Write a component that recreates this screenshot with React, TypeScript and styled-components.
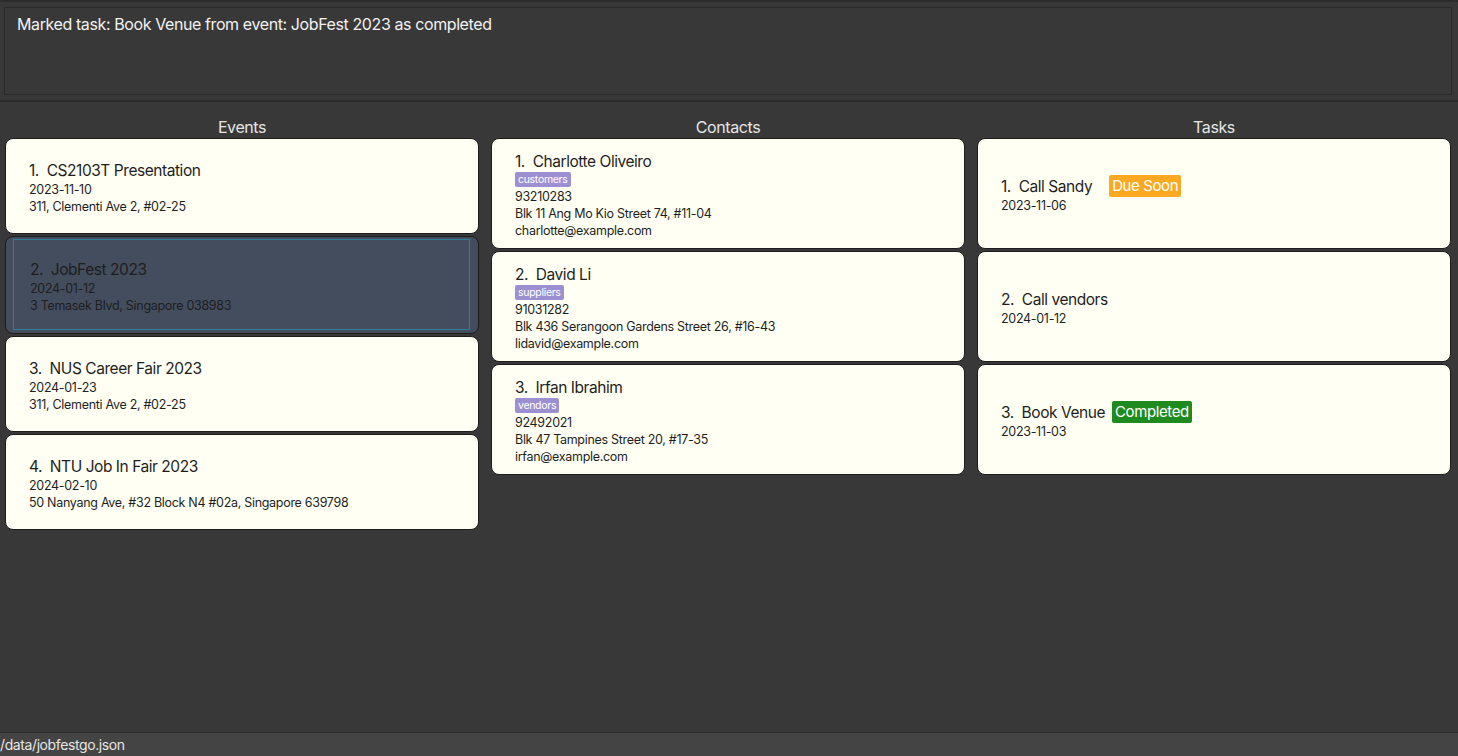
import React from 'react';
import styled, { createGlobalStyle, css } from 'styled-components';

const GlobalStyle = createGlobalStyle`
  html, body {
    margin: 0;
    padding: 0;
    background: #383838;
    font-family: Inter, "Open Sans", "Liberation Sans", sans-serif;
    overflow: hidden;
  }
  * { box-sizing: border-box; }
`;

const Window = styled.div`
  width: 1458px;
  height: 756px;
  display: flex;
  flex-direction: column;
  background: #383838;
  border-top: 2px solid #2c2c2c;
`;

const ResultArea = styled.div`
  padding: 5px 6px 5px 4px;
  border-bottom: 2px solid #2c2c2c;
`;

const ResultBox = styled.div`
  height: 88px;
  border: 1px solid #2a2a2a;
  padding: 5px 12px;
  color: #f2f2f2;
  font-size: 16px;
  line-height: 22px;
  letter-spacing: -0.4px;
`;

const Panels = styled.div`
  flex: 1;
  display: grid;
  grid-template-columns: repeat(3, 1fr);
  padding-top: 10px;
`;

const Column = styled.div`
  display: flex;
  flex-direction: column;
  padding: 0 7px 0 5px;
`;

const ColumnTitle = styled.div`
  text-align: center;
  color: #e6e6e6;
  font-size: 16px;
  line-height: 20px;
  letter-spacing: -0.4px;
  height: 26px;
  padding-top: 5px;
`;

const List = styled.div`
  display: flex;
  flex-direction: column;
  gap: 2px;
`;

const Card = styled.div<{ $h: number; $selected?: boolean }>`
  position: relative;
  height: ${({ $h }) => $h}px;
  display: flex;
  flex-direction: column;
  justify-content: center;
  padding: 2px 20px 0 23px;
  background: #fffff3;
  border: 1px solid #1c1c1c;
  border-radius: 8px;
  color: #1e1e1e;
  ${({ $selected }) =>
    $selected &&
    css`
      background: #434d5e;
      padding-left: 24px;
      &::after {
        content: '';
        position: absolute;
        inset: 2px 8px 3px 7px;
        border: 1px solid #2e7f98;
        pointer-events: none;
      }
    `}
`;

const TitleRow = styled.div`
  display: flex;
  align-items: center;
`;

const Title = styled.div`
  font-size: 15.5px;
  line-height: 21px;
  letter-spacing: -0.45px;
  white-space: pre;
  color: #1e1e1e;
`;

const Detail = styled.div`
  font-size: 12.5px;
  line-height: 17px;
  letter-spacing: -0.3px;
  white-space: pre;
  color: #1e1e1e;
`;

const Tag = styled.span`
  align-self: flex-start;
  background: #9d90d2;
  color: #ffffff;
  font-size: 10.5px;
  line-height: 15px;
  letter-spacing: -0.3px;
  padding: 0 3px;
  border-radius: 2px;
  margin: 0 0 1px;
`;

const Badge = styled.span<{ $color: string; $gap: number }>`
  background: ${({ $color }) => $color};
  color: #ffffff;
  font-size: 15px;
  line-height: 22px;
  letter-spacing: -0.4px;
  padding: 0 3px;
  border-radius: 2px;
  margin-left: ${({ $gap }) => $gap}px;
`;

const StatusBar = styled.div`
  height: 24px;
  background: #444444;
  border-top: 1px solid #2e2e2e;
  color: #e6e6e6;
  font-size: 14px;
  line-height: 23px;
  letter-spacing: -0.4px;
`;

const events = [
  { title: 'CS2103T Presentation', date: '2023-11-10', address: '311, Clementi Ave 2, #02-25' },
  { title: 'JobFest 2023', date: '2024-01-12', address: '3 Temasek Blvd, Singapore 038983', selected: true },
  { title: 'NUS Career Fair 2023', date: '2024-01-23', address: '311, Clementi Ave 2, #02-25' },
  { title: 'NTU Job In Fair 2023', date: '2024-02-10', address: '50 Nanyang Ave, #32 Block N4 #02a, Singapore 639798' },
];

const contacts = [
  { name: 'Charlotte Oliveiro', tag: 'customers', phone: '93210283', address: 'Blk 11 Ang Mo Kio Street 74, #11-04', email: 'charlotte@example.com' },
  { name: 'David Li', tag: 'suppliers', phone: '91031282', address: 'Blk 436 Serangoon Gardens Street 26, #16-43', email: 'lidavid@example.com' },
  { name: 'Irfan Ibrahim', tag: 'vendors', phone: '92492021', address: 'Blk 47 Tampines Street 20, #17-35', email: 'irfan@example.com' },
];

const tasks = [
  { name: 'Call Sandy', date: '2023-11-06', badge: 'Due Soon', color: '#fba823', gap: 17 },
  { name: 'Call vendors', date: '2024-01-12' },
  { name: 'Book Venue', date: '2023-11-03', badge: 'Completed', color: '#1f8b1f', gap: 7 },
];

const App: React.FC = () => {
  return (
    <>
      <GlobalStyle />
      <Window>
        <ResultArea>
          <ResultBox>Marked task: Book Venue from event: JobFest 2023 as completed</ResultBox>
        </ResultArea>

        <Panels>
          <Column>
            <ColumnTitle>Events</ColumnTitle>
            <List>
              {events.map((ev, i) => (
                <Card key={ev.title} $h={ev.selected ? 98 : 96} $selected={ev.selected}>
                  <Title>{`${i + 1}.  ${ev.title}`}</Title>
                  <Detail>{ev.date}</Detail>
                  <Detail>{ev.address}</Detail>
                </Card>
              ))}
            </List>
          </Column>

          <Column>
            <ColumnTitle>Contacts</ColumnTitle>
            <List>
              {contacts.map((c, i) => (
                <Card key={c.name} $h={111}>
                  <Title>{`${i + 1}.  ${c.name}`}</Title>
                  <Tag>{c.tag}</Tag>
                  <Detail>{c.phone}</Detail>
                  <Detail>{c.address}</Detail>
                  <Detail>{c.email}</Detail>
                </Card>
              ))}
            </List>
          </Column>

          <Column>
            <ColumnTitle>Tasks</ColumnTitle>
            <List>
              {tasks.map((t, i) => (
                <Card key={t.name} $h={111}>
                  <TitleRow>
                    <Title>{`${i + 1}.  ${t.name}`}</Title>
                    {t.badge && (
                      <Badge $color={t.color!} $gap={t.gap!}>
                        {t.badge}
                      </Badge>
                    )}
                  </TitleRow>
                  <Detail>{t.date}</Detail>
                </Card>
              ))}
            </List>
          </Column>
        </Panels>

        <StatusBar>/data/jobfestgo.json</StatusBar>
      </Window>
    </>
  );
};

export default App;
